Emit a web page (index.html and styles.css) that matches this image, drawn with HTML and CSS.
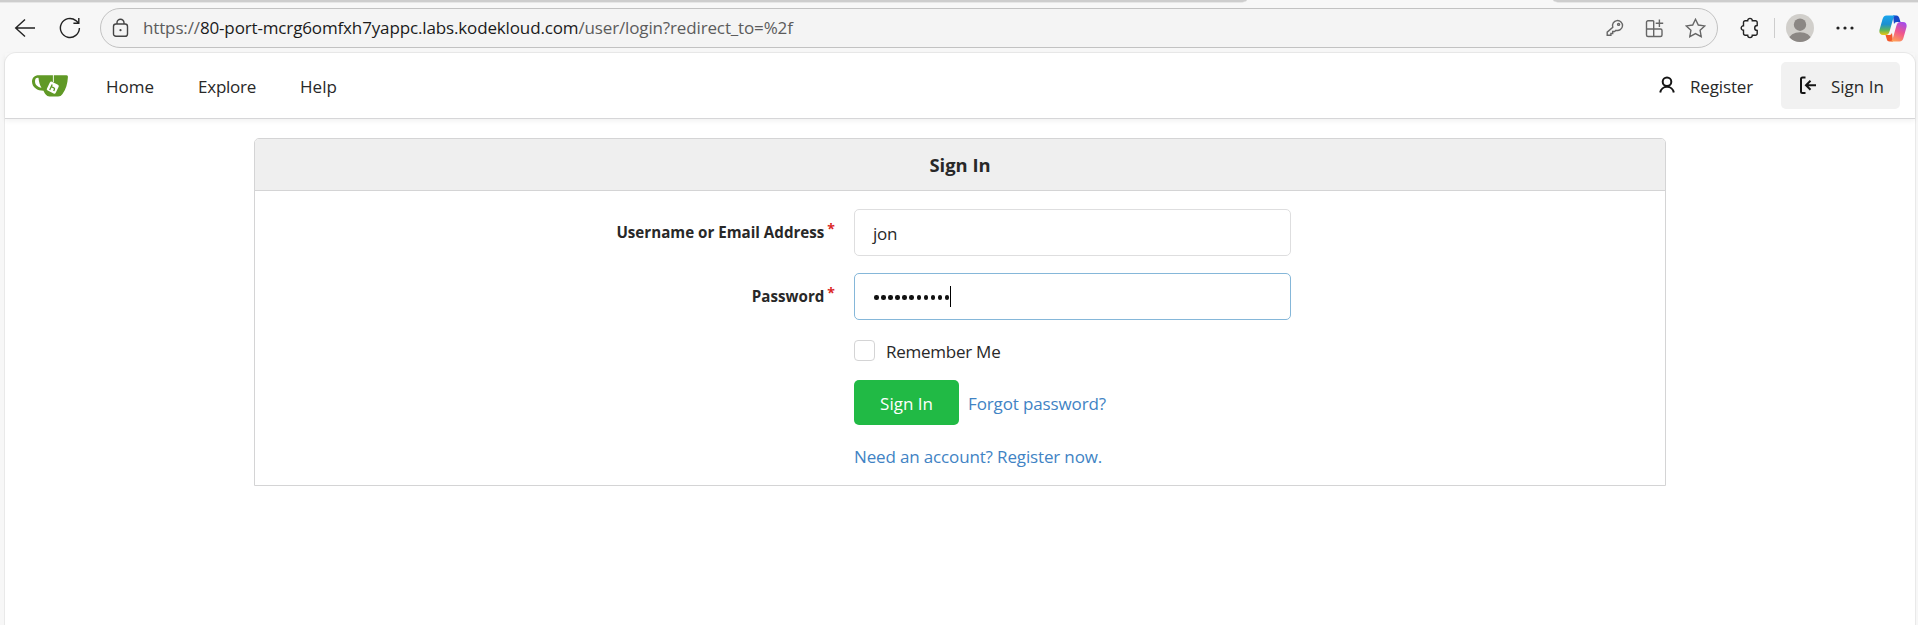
FILE: index.html
```html
<!DOCTYPE html>
<html lang="en">
<head>
<meta charset="utf-8">
<title>Sign In</title>
<link rel="stylesheet" href="styles.css">
</head>
<body>
<div class="browser">
  <div class="tabs"><span class="tab-edge tab-edge-left"></span><span class="tab-edge tab-edge-right"></span></div>
  <header class="toolbar">
    <svg class="back" width="22" height="20" viewBox="0 0 22 20"><path d="M11 1.5 1.7 10l9.3 8.5M1.7 10H21"/></svg>
    <svg class="reload" width="22" height="22" viewBox="0 0 22 22"><path d="M20.4 11A9.5 9.5 0 1 1 16.900 3.600L19.600 6M19.800 1v5.200h-5.400"/></svg>
    <div class="address">
      <svg class="lock" width="18" height="20" viewBox="0 0 18 20"><rect x="1.5" y="6" width="14" height="12.3" rx="2.4"/><path d="M5 6V4.7a3.5 3.5 0 0 1 7 0V6"/><circle cx="8.5" cy="12.2" r="1.1"/></svg>
      <span class="url"><span class="dim">https://</span>80-port-mcrg6omfxh7yappc.labs.kodekloud.com<span class="dim">/user/login?redirect_to=%2f</span></span>
      <svg class="key" width="18" height="18" viewBox="0 0 18 18"><path d="M6.8 8.2A5 5 0 1 1 10 11.3L8.6 12.5H6.7v2H4.9v1.7H1.2v-3.1z"/><circle cx="12.6" cy="5.4" r="1"/></svg>
      <svg class="apps" width="19" height="19" viewBox="0 0 19 19"><path d="M8.7 1.8H3A1.5 1.5 0 0 0 1.5 3.3V16A1.5 1.5 0 0 0 3 17.5H15.500A1.5 1.5 0 0 0 17 16V11.500A1.5 1.5 0 0 0 15.500 10H1.500M8.700 1.800V17.500M14.400 .5v7.500M10.700 4.200h7.500"/></svg>
      <svg class="star" width="21" height="20" viewBox="0 0 21 20"><path d="M10.500 1.300 13.300 7 19.700 7.900 15.100 12.300 16.200 18.600 10.500 15.600 4.800 18.600 5.900 12.300 1.300 7.900 7.700 7Z"/></svg>
    </div>
    <svg class="puzzle" width="20" height="22" viewBox="0 0 20 22"><path d="M5.200 3.700H7.700a2.300 2.300 0 1 1 4.600 0H15.500a1.700 1.700 0 0 1 1.700 1.700V8.500a2.500 2.500 0 1 0 0 5V16.600A1.700 1.700 0 0 1 15.500 18.300H12.300a2.300 2.300 0 1 1-4.600 0H5.200A1.700 1.700 0 0 1 3.500 16.600V13.300a2.300 2.300 0 1 1 0-4.600V5.400A1.700 1.700 0 0 1 5.200 3.700Z"/></svg>
    <span class="divider"></span>
    <svg class="avatar" width="28" height="28" viewBox="0 0 28 28"><defs><clipPath id="disc"><circle cx="14" cy="14" r="14"/></clipPath></defs><g clip-path="url(#disc)"><path fill="#d1cfcb" d="M0 0h28v28H0z"/><circle cx="14" cy="10.700" r="6.200" fill="#8b8784"/><ellipse cx="14" cy="25.500" rx="11" ry="7.300" fill="#8b8784"/></g></svg>
    <svg class="more" width="18" height="4" viewBox="0 0 18 4"><circle cx="2" cy="2" r="1.600"/><circle cx="9" cy="2" r="1.600"/><circle cx="16" cy="2" r="1.600"/></svg>
    <svg class="copilot" width="28" height="27" viewBox="0 0 28 27">
      <defs>
        <linearGradient id="cpA" x1="0" y1="0" x2="0" y2="1"><stop offset="0" stop-color="#1aa6ee"/><stop offset=".45" stop-color="#1c8fd0"/><stop offset=".75" stop-color="#5cb45c"/><stop offset="1" stop-color="#f0c60e"/></linearGradient>
        <linearGradient id="cpB" x1=".7" y1="0" x2=".3" y2="1"><stop offset="0" stop-color="#a54de8"/><stop offset=".5" stop-color="#f0568c"/><stop offset="1" stop-color="#ffa057"/></linearGradient>
      </defs>
      <path fill="#1748c8" d="M14 .5h3.500c1.500 0 2.300 1 2.700 2.300L21.500 7H18c-1.500 0-2.500.8-3 2.300z"/>
      <path fill="#f2592b" d="M14 26.500h-3.500c-1.500 0-2.300-1-2.700-2.300L6.500 20H10c1.500 0 2.500-.8 3-2.300z"/>
      <path fill="url(#cpA)" d="M7.500.5h9.200c-1.400.4-2 1.300-2.500 2.900L10.700 16c-.8 2.600-1.700 4-4 4H4C.9 20-.2 17.500.6 14.600L3.500 4.300C4.200 1.800 5.300.5 7.500.5Z"/>
      <path fill="url(#cpB)" d="M20.500 26.500h-9.200c1.400-.4 2-1.300 2.500-2.900L17.300 11c.8-2.600 1.700-4 4-4H24c3.100 0 4.200 2.500 3.400 5.400l-2.900 10.300c-.7 2.500-1.800 3.800-4 3.800Z"/>
    </svg>
  </header>
  <main class="page">
    <nav class="navbar">
      <svg class="logo" width="36" height="22" viewBox="0 0 36 22"><path fill="#609926" d="M12 .3H34.500C35.600.3 36 1 35.900 2.200 35.600 8 34 14.500 30.500 19 29.300 20.700 28 21.500 26 21.500H17.500C14.500 21.500 12.600 18.500 11.500 15.800 5.500 15.700 0 12.500 0 6.500 0 2.500 2.800.2 6.500.2Z"/><path fill="#fff" d="M3 6.200C3 3.800 4.200 2.600 6.500 2.900 7 7 7.800 10 9.500 12.700 5.500 12 3 9.800 3 6.200Z"/><path d="M21.400 0V7" stroke="#fff" stroke-width=".9"/><rect x="15.900" y="7.700" width="9.800" height="9.800" rx="1.600" fill="#fff" transform="rotate(26 20.800 12.600)"/><path d="M20.200 9.500 17.700 15M19.300 11.700l2.600 1.200c.7.300.8.800.5 1.500l-.7 1.700" fill="none" stroke="#609926" stroke-width="1.300"/></svg>
      <a class="nav home">Home</a><a class="nav explore">Explore</a><a class="nav help">Help</a>
      <a class="register"><svg width="16" height="18" viewBox="0 0 16 18"><circle cx="8" cy="5.700" r="4.300"/><path d="M1.200 16.500a6.900 6.900 0 0 1 13.600 0"/></svg><span class="nav">Register</span></a>
      <a class="signin"><svg width="18" height="19" viewBox="0 0 18 19"><path d="M6.500 1.500H3.500A1.500 1.500 0 0 0 2 3V15.500A1.500 1.500 0 0 0 3.500 17H6.500M17 9.300H7.500M11.500 4.800l-4.500 4.500 4.500 4.500"/></svg><span class="nav">Sign In</span></a>
    </nav>
    <form class="panel">
      <h4 class="title"><span>Sign In</span></h4>
      <div class="fields">
        <div class="row"><label class="label">Username or Email Address<sup>*</sup></label><div class="input"><span class="value">jon</span></div></div>
        <div class="row"><label class="label">Password<sup>*</sup></label><div class="input focus"><span class="dots"><i></i><i></i><i></i><i></i><i></i><i></i><i></i><i></i><i></i><i></i><i></i></span><span class="caret"></span></div></div>
        <div class="remember"><span class="check"></span><span class="remember-text">Remember Me</span></div>
        <div class="actions"><span class="submit">Sign In</span><a class="forgot">Forgot password?</a></div>
        <a class="need">Need an account? Register now.</a>
      </div>
    </form>
  </main>
</div>
</body>
</html>
```
FILE: styles.css
```css
* { box-sizing: border-box; }
body { margin: 0; font: 17px/22px "Open Sans", "Noto Sans", sans-serif; color: #282828; }
svg { display: block; flex: none; fill: none; stroke: #222; stroke-width: 1.4; }
.browser { height: 625px; background: #f7f7f7; display: flex; flex-direction: column; overflow: hidden; }
.tabs { height: 3px; display: flex; justify-content: space-between; }
.tab-edge { height: 3px; background: #cdcdcd; border-bottom: 1px solid #e6e6e6; }
.tab-edge-left { width: 1247px; border-bottom-right-radius: 8px 3px; }
.tab-edge-right { width: 365px; border-bottom-left-radius: 8px 3px; }
.toolbar { height: 49px; display: flex; align-items: center; padding: 1px 11px 0 14px; }
.reload { margin-left: 23px; }
.address { width: 1618px; height: 40px; margin-left: 19px; border: 1px solid #c2c2c2; border-radius: 20px; background: #f4f4f4; display: flex; align-items: center; padding: 0 11px 0 11px; }
.address svg { stroke: #666; }
.address .lock { stroke: #444; }
.lock circle { fill: #444; stroke: none; }
.url { margin-left: 13px; color: #1b1b1b; white-space: nowrap; letter-spacing: -.14px; }
.dim { color: #5c5c5c; }
.key { margin-left: auto; }
.apps { margin-left: 21px; }
.star { margin-left: 21px; }
.puzzle { margin-left: 22px; }
.divider { width: 1px; height: 20px; background: #cdcdcd; margin-left: 14px; }
.avatar { margin-left: 11px; stroke: none; }
.more { margin-left: 22px; fill: #222; stroke: none; }
.copilot { margin-left: auto; stroke: none; }
.page { flex: 1; margin: 0 2px 0 4px; border: 1px solid #e9e9e9; border-bottom: 0; border-radius: 12px 12px 0 0; background: #fff; }
.navbar { height: 66px; border-bottom: 1px solid #d6d6d8; box-shadow: 0 2px 5px rgba(0,0,0,.06); display: flex; align-items: center; padding: 0 15px 0 27px; }
.logo { stroke: none; margin-top: 1px; }
.nav { padding-top: 2px; }
.home { margin-left: 38px; }
.explore { margin-left: 44px; letter-spacing: -.25px; }
.help { margin-left: 44px; }
.register { margin-left: auto; display: flex; align-items: center; }
.register svg, .signin svg { stroke: #151515; stroke-width: 2; }
.register svg { margin-top: -1px; }
.register span { margin-left: 15px; letter-spacing: -.15px; }
.signin { width: 119px; height: 47px; margin-left: 28px; background: #f1f1f1; border-radius: 5px; display: flex; align-items: center; padding-left: 18px; }
.signin span { margin-left: 14px; white-space: nowrap; }
.panel { width: 1412px; height: 348px; margin: 19px 0 0 249px; border: 1px solid #d4d4d5; border-radius: 5px 5px 0 0; }
.title { margin: 0; height: 52px; background: #efefef; border-bottom: 1px solid #d4d4d5; border-radius: 4px 4px 0 0; display: flex; align-items: center; justify-content: center; font-size: 18.4px; }
.fields { padding: 18px 0 0 599px; }
.row { display: flex; height: 47px; margin-bottom: 17px; margin-left: -599px; }
.label { width: 599px; padding-right: 19px; font-weight: 700; font-size: 15.15px; text-align: right; white-space: nowrap; padding-top: 12px; }
sup { color: #db2828; margin-left: 3px; font-size: 14px; line-height: 0; vertical-align: 4px; }
.input { width: 437px; border: 1px solid #dededf; border-radius: 5px; display: flex; align-items: center; padding: 2px 0 0 18px; }
.value { letter-spacing: -.3px; }
.focus { border-color: #85b7d9; padding-left: 19px; }
.dots { display: flex; gap: 2.6px; }
.dots i { width: 4.5px; height: 4.5px; border-radius: 50%; background: #111; }
.caret { width: 1px; height: 21px; margin: -3px 0 0 1px; background: #000; }
.remember { display: flex; align-items: center; height: 25px; margin-top: 19px; }
.check { width: 21px; height: 21px; margin-top: -2px; border: 1px solid #d4d4d5; border-radius: 4px; }
.remember-text { margin-left: 11px; letter-spacing: -.25px; padding-top: 1px; }
.actions { display: flex; align-items: center; margin-top: 16px; }
.submit { width: 105px; height: 45px; padding-top: 2px; border-radius: 5px; background: #21ba45; color: #fff; display: flex; align-items: center; justify-content: center; }
.forgot { margin-left: 9px; padding-top: 2px; letter-spacing: -.13px; }
.forgot, .need { color: #4183c4; }
.need { display: inline-block; margin-top: 21px; letter-spacing: -.15px; }
```
